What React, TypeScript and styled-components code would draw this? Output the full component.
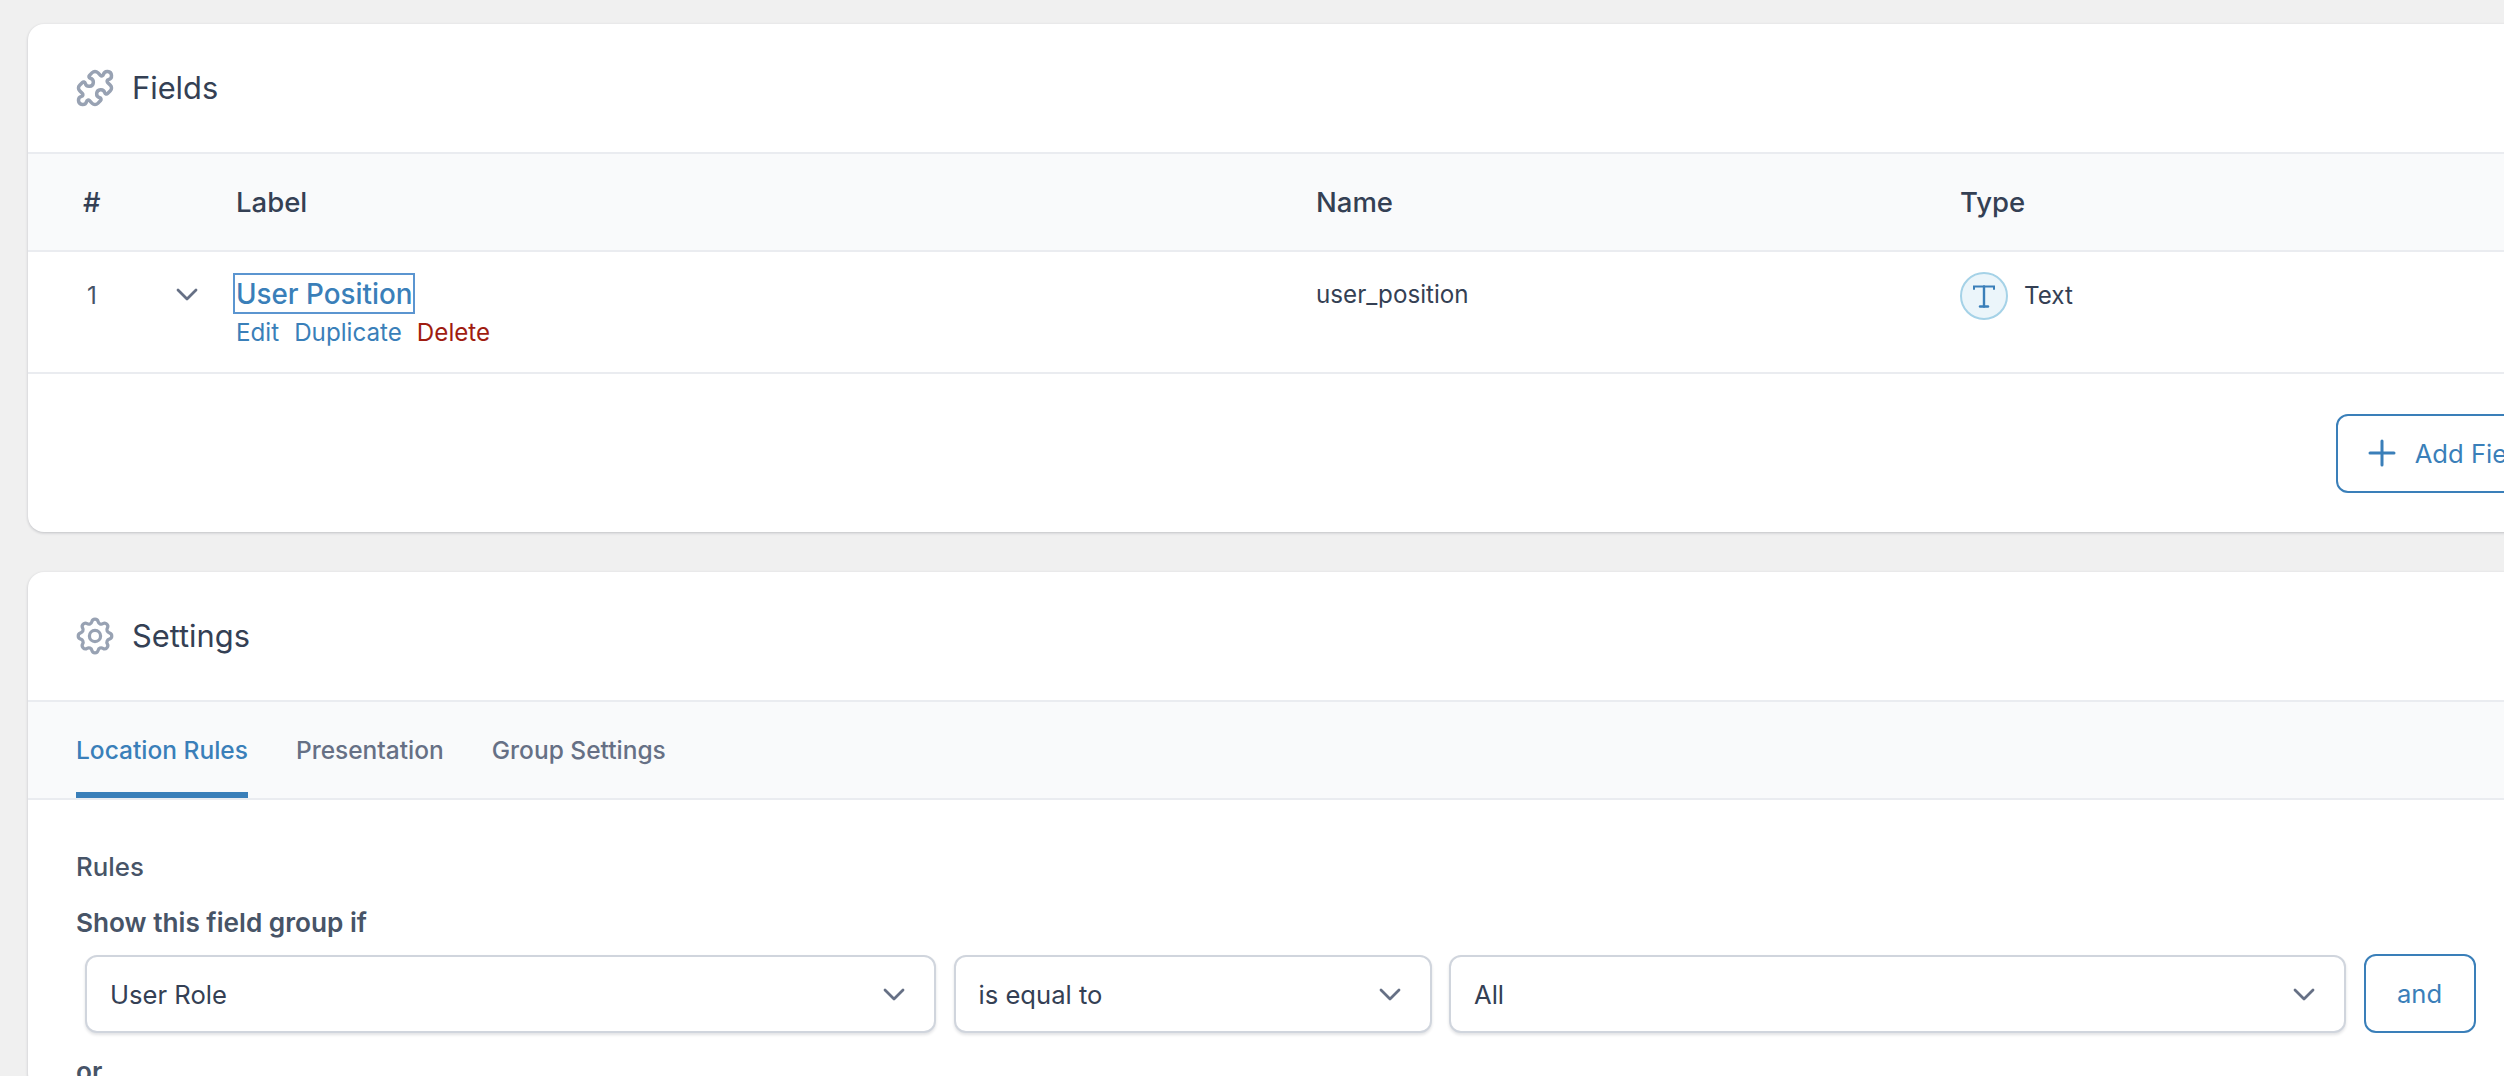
import React from 'react';
import styled, {createGlobalStyle} from 'styled-components';
import {Puzzle} from 'lucide-react';

const GlobalStyle = createGlobalStyle`
  html, body {
    margin: 0;
    height: 100%;
    overflow: hidden;
    background: #f0f0f0;
  }
  body {
    font-family: Inter, "Liberation Sans", sans-serif;
    font-size: 24.2px;
    color: #344054;
  }
`;

const BLUE = '#3a7fb9';

const Page = styled.div`
  width: 2581px;
  height: 1076px;
  padding: 24px 0 0 28px;
  box-sizing: content-box;
  display: flex;
  flex-direction: column;
  gap: 40px;
`;

const Card = styled.section`
  background: #fff;
  border-radius: 16px;
  box-shadow: 0 1px 3px rgba(16, 24, 40, 0.22);
`;

const CardHeader = styled.header`
  height: 128px;
  display: flex;
  align-items: center;
  gap: 18px;
  padding-left: 48px;
  border-bottom: 2px solid #eaecf0;
`;

const HeaderIcon = styled.svg`
  width: 38px;
  height: 38px;
  flex: none;
  fill: none;
  stroke: #98a2b3;
  stroke-width: 1.75;
  stroke-linecap: round;
  stroke-linejoin: round;
`;

const PuzzleGlyph = styled(Puzzle)`
  width: 38px;
  height: 38px;
  flex: none;
  color: #98a2b3;
`;

const CardTitle = styled.h3`
  margin: 0;
  font-size: 30.8px;
  font-weight: 400;
  line-height: 40px;
  color: #344054;
`;

const FieldRow = styled.div<{$head?: boolean}>`
  display: grid;
  grid-template-columns: 93px 60px 1080px 644px 1fr;
  padding-left: 55px;
  border-bottom: 2px solid #eaecf0;
  background: ${p => (p.$head ? '#f9fafb' : '#fff')};
  height: ${p => (p.$head ? '96px' : '120px')};
  align-items: ${p => (p.$head ? 'center' : 'start')};
  font-weight: ${p => (p.$head ? 500 : 400)};
  font-size: ${p => (p.$head ? '27.5px' : '24.2px')};
  box-sizing: content-box;
`;

const IndexCell = styled.div`
  padding: 28px 0 0 4px;
  line-height: 32px;
  color: #475467;
`;

const ToggleCell = styled.div`
  padding-top: 36px;
  display: flex;
`;

const Chevron = styled.svg`
  width: 22px;
  height: 14px;
  fill: none;
  stroke: #667085;
  stroke-width: 2.8;
  stroke-linecap: round;
  stroke-linejoin: round;
  flex: none;
`;

const LabelCell = styled.div`
  padding-top: 23px;
  margin-left: -1px;
`;

const FocusedLink = styled.a`
  display: inline-block;
  padding: 1px 1px 0;
  font-size: 27.8px;
  font-weight: 500;
  line-height: 36px;
  color: ${BLUE};
  box-shadow: 0 0 0 2px #5b95d0;
`;

const RowActions = styled.div`
  display: flex;
  gap: 15px;
  margin: 5px 0 0 1px;
  line-height: 32px;
`;

const RowAction = styled.a<{$danger?: boolean}>`
  color: ${p => (p.$danger ? '#9f1c10' : BLUE)};
`;

const NameCell = styled.div`
  padding-top: 27px;
  line-height: 32px;
`;

const TypeCell = styled.div`
  padding-top: 20px;
  display: flex;
  align-items: center;
  gap: 16px;
  line-height: 32px;
`;

const TypeBadge = styled.span`
  width: 48px;
  height: 48px;
  box-sizing: border-box;
  border-radius: 50%;
  background: #ebf5fa;
  border: 2px solid #a5d2e7;
  display: flex;
  align-items: center;
  justify-content: center;
`;

const CardFooter = styled.div`
  height: 158px;
  display: flex;
  align-items: center;
  justify-content: flex-end;
  padding-right: 48px;
`;

const OutlineButton = styled.button`
  display: flex;
  align-items: center;
  justify-content: center;
  gap: 19px;
  background: #fff;
  border: 2px solid ${BLUE};
  border-radius: 12px;
  color: ${BLUE};
  font: 400 25.6px Inter, "Liberation Sans", sans-serif;
  height: 79px;
  padding: 0 30px;
`;

const Tabs = styled.nav`
  height: 96px;
  display: flex;
  gap: 48px;
  padding-left: 48px;
  background: #f9fafb;
  border-bottom: 2px solid #eaecf0;
`;

const Tab = styled.a<{$active?: boolean}>`
  display: flex;
  align-items: center;
  height: 96px;
  box-sizing: border-box;
  padding-top: ${p => (p.$active ? '6px' : '0')};
  border-bottom: ${p => (p.$active ? `6px solid ${BLUE}` : 'none')};
  font-size: 24.5px;
  font-weight: 500;
  color: ${p => (p.$active ? BLUE : '#667085')};
`;

const RulesBody = styled.div`
  padding: 50px 0 0 48px;
`;

const RulesTitle = styled.div`
  font-size: 25.8px;
  font-weight: 500;
  line-height: 34px;
  color: #475467;
`;

const GroupHeading = styled.h4`
  margin: 22px 0 14px;
  font-size: 26.2px;
  font-weight: 600;
  line-height: 34px;
  color: #475467;
`;

const RuleRow = styled.div`
  display: grid;
  grid-template-columns: 851px 478px 897px 112px;
  gap: 17.5px;
  align-items: center;
  margin-left: 9px;
`;

const SelectBox = styled.div`
  height: 78px;
  box-sizing: border-box;
  display: flex;
  align-items: center;
  justify-content: space-between;
  padding: 2px 29px 0 23px;
  background: #fff;
  border: 2px solid #d0d5dd;
  border-radius: 12px;
  box-shadow: 0 2px 3px rgba(16, 24, 40, 0.12);
  color: #344054;
  font-size: 25.6px;
`;

const OrLabel = styled.div`
  margin-top: 22px;
  font-size: 26.2px;
  font-weight: 600;
  line-height: 34px;
  color: #475467;
`;

const DownIcon = () => (
  <Chevron viewBox="0 0 22 14">
    <path d="M2 2l9 9 9-9" />
  </Chevron>
);

const CogIcon = () => (
  <HeaderIcon viewBox="1.8 1.8 20.4 20.4">
    <path d="M10.325 4.317c.426-1.756 2.924-1.756 3.35 0a1.724 1.724 0 002.573 1.066c1.543-.94 3.31.826 2.37 2.37a1.724 1.724 0 001.065 2.572c1.756.426 1.756 2.924 0 3.35a1.724 1.724 0 00-1.066 2.573c.94 1.543-.826 3.31-2.37 2.37a1.724 1.724 0 00-2.572 1.065c-.426 1.756-2.924 1.756-3.35 0a1.724 1.724 0 00-2.573-1.066c-1.543.94-3.31-.826-2.37-2.37a1.724 1.724 0 00-1.065-2.572c-1.756-.426-1.756-2.924 0-3.35a1.724 1.724 0 001.066-2.573c-.94-1.543.826-3.31 2.37-2.37.996.608 2.296.07 2.572-1.065z" />
    <path d="M15 12a3 3 0 11-6 0 3 3 0 016 0z" />
  </HeaderIcon>
);

const TextTypeIcon = () => (
  <svg width="24" height="26" viewBox="0 0 24 26" fill="none" stroke={BLUE} strokeLinecap="round">
    <path d="M2 6V3.5h20V6" strokeWidth="2" />
    <path d="M12 3.5v20" strokeWidth="2.4" />
    <path d="M8 23.5h8" strokeWidth="2.4" />
  </svg>
);

const PlusIcon = () => (
  <svg width="28" height="28" viewBox="0 0 28 28" fill="none" stroke={BLUE} strokeWidth="3" strokeLinecap="round">
    <path d="M14 2v24M2 14h24" />
  </svg>
);

const App: React.FC = () => (
  <>
    <GlobalStyle />
    <Page>
      <Card>
        <CardHeader>
          <PuzzleGlyph viewBox="0.5 0.5 23 23" strokeWidth={2.1} />
          <CardTitle>Fields</CardTitle>
        </CardHeader>
        <FieldRow $head>
          <div>#</div>
          <div />
          <div>Label</div>
          <div>Name</div>
          <div>Type</div>
        </FieldRow>
        <FieldRow>
          <IndexCell>1</IndexCell>
          <ToggleCell>
            <DownIcon />
          </ToggleCell>
          <LabelCell>
            <FocusedLink>User Position</FocusedLink>
            <RowActions>
              <RowAction>Edit</RowAction>
              <RowAction>Duplicate</RowAction>
              <RowAction $danger>Delete</RowAction>
            </RowActions>
          </LabelCell>
          <NameCell>user_position</NameCell>
          <TypeCell>
            <TypeBadge>
              <TextTypeIcon />
            </TypeBadge>
            Text
          </TypeCell>
        </FieldRow>
        <CardFooter>
          <OutlineButton>
            <PlusIcon />
            Add Field
          </OutlineButton>
        </CardFooter>
      </Card>
      <Card>
        <CardHeader>
          <CogIcon />
          <CardTitle>Settings</CardTitle>
        </CardHeader>
        <Tabs>
          <Tab $active>Location Rules</Tab>
          <Tab>Presentation</Tab>
          <Tab>Group Settings</Tab>
        </Tabs>
        <RulesBody>
          <RulesTitle>Rules</RulesTitle>
          <GroupHeading>Show this field group if</GroupHeading>
          <RuleRow>
            <SelectBox>
              User Role
              <DownIcon />
            </SelectBox>
            <SelectBox>
              is equal to
              <DownIcon />
            </SelectBox>
            <SelectBox>
              All
              <DownIcon />
            </SelectBox>
            <OutlineButton>and</OutlineButton>
          </RuleRow>
          <OrLabel>or</OrLabel>
        </RulesBody>
      </Card>
    </Page>
  </>
);

export default App;
